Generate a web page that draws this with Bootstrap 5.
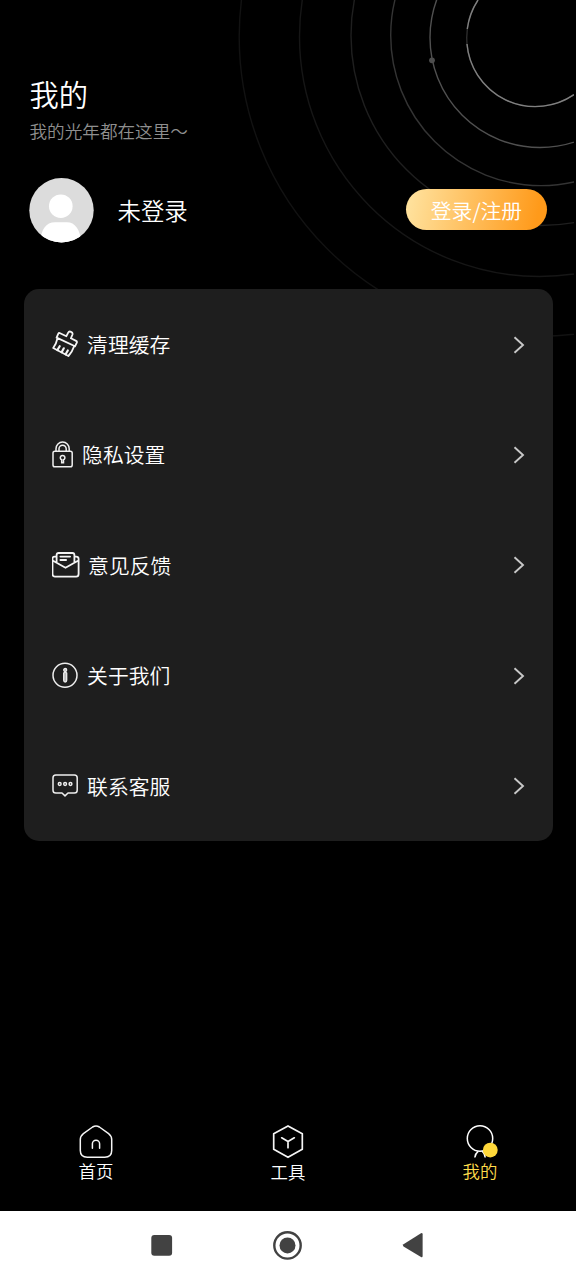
<!DOCTYPE html>
<html lang="zh-CN">
<head>
<meta charset="utf-8">
<meta name="viewport" content="width=device-width, initial-scale=1">
<title>我的</title>
<link href="https://cdn.jsdelivr.net/npm/bootstrap@5.3.0/dist/css/bootstrap.min.css" rel="stylesheet">
<style>
body{background:#000;color:#fff;font-family:"Noto Sans CJK SC",sans-serif;font-weight:350;height:1280px;overflow:hidden}
svg{display:block;flex:none}
.orbits{z-index:0}
.page-head{height:289px;padding:72px 29px 0 29px}
.page-title{font-size:29.3px;line-height:43px;font-weight:350;padding-left:.5px}
.page-sub{font-size:17.6px;line-height:26px;color:#8f8f8f;margin-top:3px;padding-left:.5px}
.profile{margin-top:33.5px}
.user-name{font-size:23.4px;line-height:34px;margin:-1px 0 0 23.5px}
.login-btn,.login-btn:hover{width:141px;height:41px;margin-top:-1px;border:0;padding:0;font-size:20.8px;line-height:42px;font-weight:350;color:#fff;background:linear-gradient(100deg,#ffe09a 5%,#ff9a1a 92%)}
.menu-card{margin:0 23.5px;height:552px;border-radius:15px;background:#1e1e1e}
.menu-row,.menu-row:hover{height:110.4px;padding:1px 28px 0 28px;background:transparent;color:#fff;border:0;font-size:20.8px}
.menu-row .label{line-height:30px;margin:-1.4px 0 0 8.6px}
.menu-row .glyph{margin-top:-1px}
.tabs{height:103px;padding-top:17px}
.tab-link,.tab-link:hover{color:#fff;font-size:17.4px;line-height:24px}
.tab-link.active{color:#ffdc4b}
.tab-drop{line-height:26px}
.sysbar{height:69px;background:#fff}
</style>
</head>
<body class="d-flex flex-column position-relative">
<svg class="orbits position-absolute top-0 start-0" width="574" height="345" viewBox="0 0 574 345" fill="none" stroke-width="1.4" aria-hidden="true">
  <circle cx="538.7" cy="36.8" r="299.5" stroke="#121212"/>
  <circle cx="539.5" cy="36.5" r="240" stroke="#161616"/>
  <circle cx="541" cy="35.5" r="190" stroke="#1f1f1f"/>
  <circle cx="541" cy="35.3" r="150.3" stroke="#343434"/>
  <circle cx="540" cy="37.5" r="110" stroke="#505050"/>
  <circle cx="535.3" cy="37.8" r="68.6" stroke="#2c2c2c"/>
  <path d="M467.3 29A68.6 68.6 0 0 1 478 0M467 44A68.6 68.6 0 0 0 574 94.7" stroke="#808080"/>
  <circle cx="432" cy="60.3" r="2.9" fill="#4d4d4d"/>
</svg>

<header class="page-head position-relative">
  <h1 class="page-title m-0">我的</h1>
  <p class="page-sub mb-0">我的光年都在这里～</p>
  <div class="profile d-flex align-items-center">
    <svg width="65" height="65" viewBox="0 0 65 65" aria-hidden="true">
      <defs><clipPath id="face"><circle cx="32.5" cy="32.2" r="32.2"/></clipPath></defs>
      <g clip-path="url(#face)"><rect width="65" height="65" fill="#dcdcdc"/><circle cx="31.8" cy="28.2" r="11.8" fill="#fff"/><path d="M11 65C12 51 17 44.2 26 44.2H38C46 44.2 51 51 52.5 65Z" fill="#fff"/></g>
    </svg>
    <span class="user-name">未登录</span>
    <a href="#" class="login-btn btn rounded-pill ms-auto">登录/注册</a>
  </div>
</header>

<main class="menu-card list-group list-group-flush position-relative">
  <a href="#" class="menu-row list-group-item d-flex align-items-center">
    <svg class="glyph" width="27" height="28" viewBox="0 0 27 28" fill="none" stroke="#f5f5f5" stroke-width="1.8" stroke-linejoin="round" stroke-linecap="round"><path d="M4.6 7.6L6.2 3.9Q6.8 2.6 8.1 3.2L14.4 6.2L16.2 2.6Q17 1 19 1.8T20.5 4.5L18.9 8.3L24.1 10.9Q25.3 11.5 24.8 12.7L23 16.3ZM5.5 8.2Q4.4 13.5 1.2 18L16.4 26Q20.3 22 22 16.6"/><path d="M5.4 20L7.7 16.2M9.6 22.2L11.8 18.3M13.6 24.3L15.8 20.5" stroke-width="2.2"/></svg>
    <span class="label">清理缓存</span>
    <svg class="ms-auto" width="12" height="18" viewBox="0 0 12 18" fill="none" stroke="#c8c8c8" stroke-width="1.9"><path d="M1.5 1.3L10 9L1.5 16.7"/></svg>
  </a>
  <a href="#" class="menu-row list-group-item d-flex align-items-center">
    <svg class="glyph" width="22" height="27" viewBox="0 0 22 27" fill="none" stroke="#f0f0f0" stroke-width="1.5"><rect x="1" y="10.3" width="19.2" height="15.5" rx="1.8"/><path d="M4 10V7.7a6.6 6.6 0 0 1 13.2 0V10M7 10V7.8a3.6 3.6 0 0 1 7.2 0V10"/><path d="M9.7 18.8a2.3 2.3 0 1 1 1.8 0V21.7H9.7Z"/></svg>
    <span class="label">隐私设置</span>
    <svg class="ms-auto" width="12" height="18" viewBox="0 0 12 18" fill="none" stroke="#c8c8c8" stroke-width="1.9"><path d="M1.5 1.3L10 9L1.5 16.7"/></svg>
  </a>
  <a href="#" class="menu-row list-group-item d-flex align-items-center">
    <svg class="glyph" width="28" height="26" viewBox="0 0 28 26" fill="none" stroke="#f5f5f5" stroke-width="1.8" stroke-linejoin="round" stroke-linecap="round"><path d="M4.6 4.6H2.8Q.5 4.6.5 7V22Q.5 24.6 2.8 24.6H24.2Q26.6 24.6 26.6 22V7Q26.6 4.6 24.2 4.6H22.4M.6 8.5L13.5 15.8L26.4 8.5M4.6 10.5V3Q4.6 1 6.6 1H20.4Q22.4 1 22.4 3V10.5M8.4 4.6H18.1M8.4 8H14.1"/></svg>
    <span class="label">意见反馈</span>
    <svg class="ms-auto" width="12" height="18" viewBox="0 0 12 18" fill="none" stroke="#c8c8c8" stroke-width="1.9"><path d="M1.5 1.3L10 9L1.5 16.7"/></svg>
  </a>
  <a href="#" class="menu-row list-group-item d-flex align-items-center">
    <svg class="glyph" width="27" height="27" viewBox="0 0 27 27" fill="none" stroke="#eee" stroke-width="1.5"><circle cx="13" cy="13.2" r="12"/><path d="M13.2 9.8L11.7 11V18.3Q11.7 20 13.2 20T14.7 18.3V11Z" fill="#bbb" stroke-width="1.3"/><circle cx="13.2" cy="8" r="1.5" stroke-width="1.3" fill="#bbb"/></svg>
    <span class="label">关于我们</span>
    <svg class="ms-auto" width="12" height="18" viewBox="0 0 12 18" fill="none" stroke="#c8c8c8" stroke-width="1.9"><path d="M1.5 1.3L10 9L1.5 16.7"/></svg>
  </a>
  <a href="#" class="menu-row list-group-item d-flex align-items-center">
    <svg class="glyph" width="27" height="23" viewBox="0 0 27 23" fill="none" stroke="#eee" stroke-width="1.5" stroke-linejoin="round"><path d="M3.8.9H22.4Q25.2.9 25.2 3.7V16.2Q25.2 19 22.4 19H16L13 21.9L10 19H3.8Q1 19 1 16.2V3.7Q1 .9 3.8.9Z"/><circle cx="7.7" cy="10" r="1.4"/><circle cx="13.1" cy="10" r="1.4"/><circle cx="18.5" cy="10" r="1.4"/></svg>
    <span class="label">联系客服</span>
    <svg class="ms-auto" width="12" height="18" viewBox="0 0 12 18" fill="none" stroke="#c8c8c8" stroke-width="1.9"><path d="M1.5 1.3L10 9L1.5 16.7"/></svg>
  </a>
</main>

<nav class="tabs nav nav-justified mt-auto align-items-start">
  <a href="#" class="tab-link nav-link p-0 d-flex flex-column align-items-center">
    <svg width="34" height="34" viewBox="0 0 34 34" fill="none" stroke="#f5f5f5" stroke-width="1.5" stroke-linecap="round"><path d="M13.6 2Q17 -.1 20.4 2L29.6 8.6Q32.7 11 32.7 14.5V25.6Q32.7 32.2 25.7 32.2H8.3Q1.3 32.2 1.3 25.6V14.5Q1.3 11 4.4 8.6ZM13.4 23.3V18.8a3.6 3.6 0 0 1 7.2 0V23.3"/></svg>
    <span>首页</span>
  </a>
  <a href="#" class="tab-link nav-link p-0 d-flex flex-column align-items-center">
    <svg width="34" height="34" viewBox="0 0 34 34" fill="none" stroke="#f5f5f5" stroke-width="1.7" stroke-linejoin="round" stroke-linecap="round"><path d="M17 .9L31.3 8.8V24.3L17 32.3L2.7 24.3V8.8ZM10.7 12.8L17 16.5L23.3 12.8M17 16.5V22.7"/></svg>
    <span class="tab-drop">工具</span>
  </a>
  <a href="#" class="tab-link nav-link active p-0 d-flex flex-column align-items-center" aria-current="page">
    <svg width="36" height="34" viewBox="0 0 36 34" fill="none" stroke="#fff" stroke-width="1.5"><circle cx="18" cy="13.5" r="12.7"/><path d="M12.8 32.5Q13.3 28.5 16.2 26.3M20.2 26.3Q22.8 28.5 23.2 32.5"/><circle cx="28.3" cy="25.1" r="7.4" fill="#ffd83a" stroke="none"/></svg>
    <span>我的</span>
  </a>
</nav>

<footer class="sysbar position-relative">
  <svg width="576" height="69" viewBox="0 0 576 69" fill="#424242" aria-hidden="true"><rect x="151.3" y="24" width="20.8" height="20.8" rx="3"/><circle cx="287.5" cy="34.4" r="13.2" fill="none" stroke="#424242" stroke-width="2.4"/><circle cx="287.5" cy="34.4" r="8"/><path d="M403.5 33.3L421 22.3Q422.6 21.6 422.6 23.3V45Q422.6 46.8 421 46L403.5 35.5Q402.2 34.4 403.5 33.3Z"/></svg>
</footer>
<script src="https://cdn.jsdelivr.net/npm/bootstrap@5.3.0/dist/js/bootstrap.bundle.min.js"></script>
</body>
</html>
